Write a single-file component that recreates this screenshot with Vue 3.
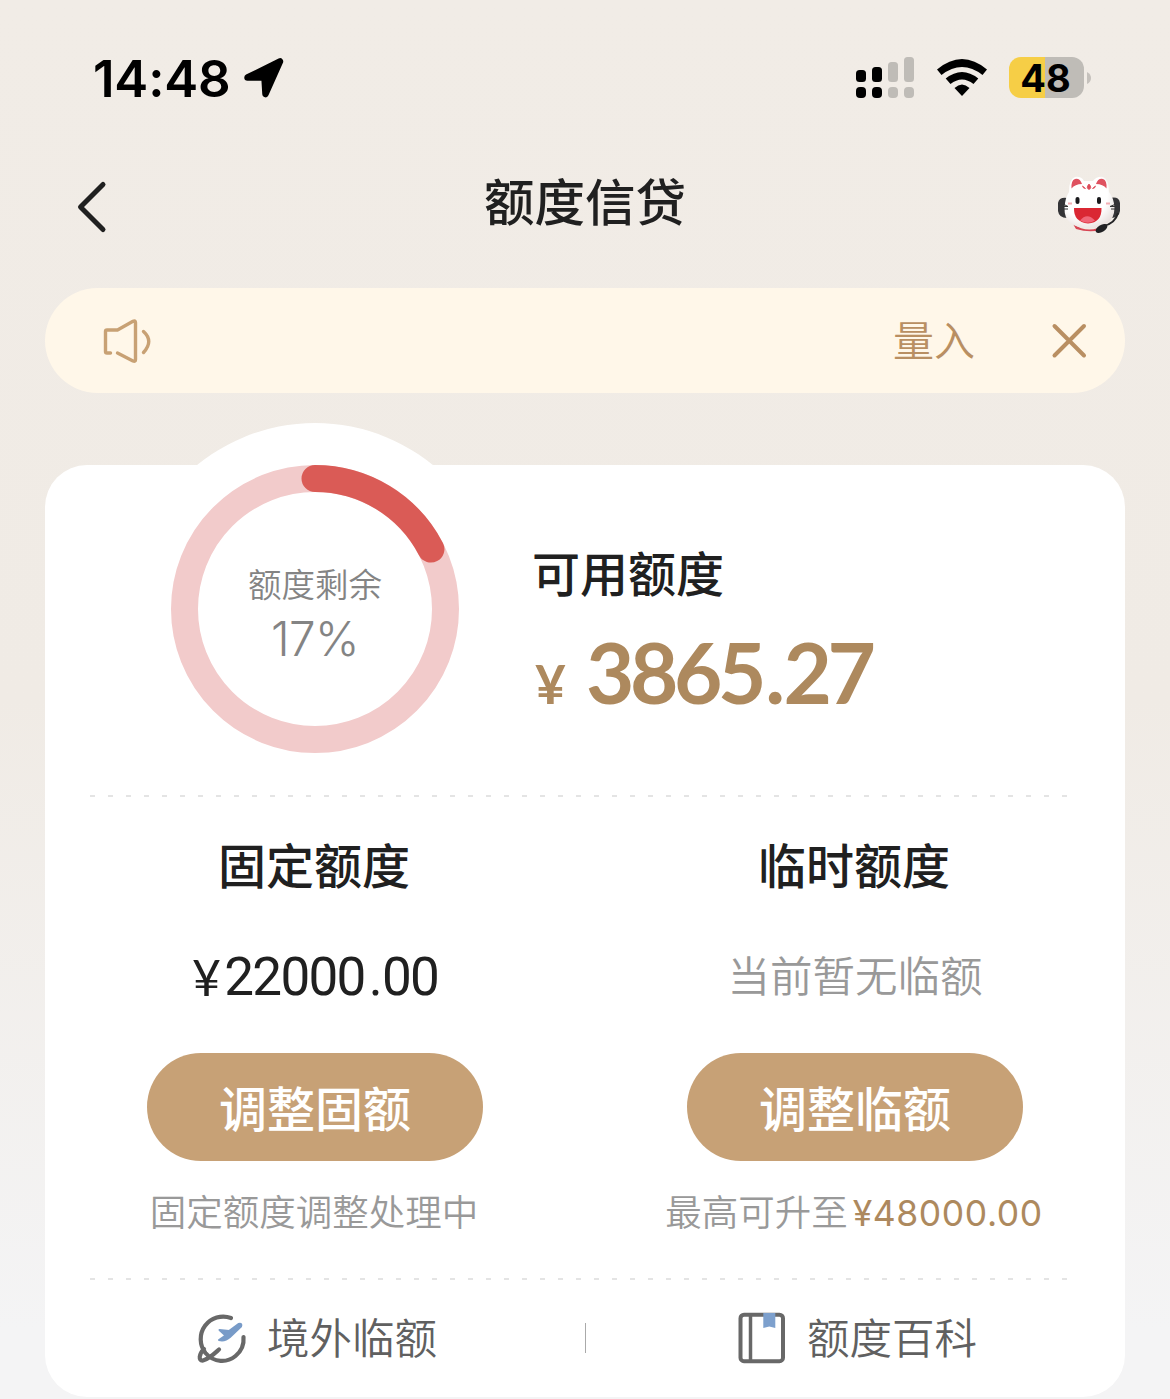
<script setup>
import { ref } from 'vue'

const percent = 17
const showNotice = ref(true)
const radius = 130.5
const circumference = 2 * Math.PI * radius
const arc = (circumference * (percent + 0.4)) / 100
</script>

<template>
  <div class="page">
    <header class="status">
      <span class="clock">14:48</span>
      <svg class="location" width="40" height="41" viewBox="0 0 40 41">
        <path d="M3.500 20.500 36 4.500 21.500 37 20.500 20.500Z" stroke="#000" stroke-width="6.500" stroke-linejoin="round" />
      </svg>
      <svg class="signal" width="60" height="42" viewBox="0 0 60 42">
        <g fill="#000">
          <rect x="1" y="13" width="10" height="12" rx="3.500" /><rect x="17" y="10" width="10" height="15" rx="3.500" />
          <rect x="1" y="30" width="10" height="11" rx="4" /><rect x="17" y="30" width="10" height="11" rx="4" />
        </g>
        <g fill="#bfbcb7">
          <rect x="33" y="5" width="10" height="20" rx="3.500" /><rect x="49" y="0" width="10" height="25" rx="3.500" />
          <rect x="33" y="30" width="10" height="11" rx="4" /><rect x="49" y="30" width="10" height="11" rx="4" />
        </g>
      </svg>
      <svg class="wifi" width="50" height="38" viewBox="0 0 50 38">
        <path d="M0 10.500Q25-10.500 50 10.500L45.500 16Q25 0 4.500 16ZM8.700 19.500Q25 6.500 41.300 19.500L36.500 25Q25 16 13.500 25ZM17.500 29Q25 22 32.500 29L25 37Z" />
      </svg>
      <div class="battery"><span>48</span></div>
      <svg class="tip" width="4" height="12" viewBox="0 0 4 12"><path d="M0 0Q4 2 4 6T0 12Z" fill="#c5c1bc" /></svg>
    </header>

    <nav class="nav">
      <svg class="back" width="34" height="54" viewBox="0 0 34 54"><path d="M29 4.500 6.500 27 29 49.500" fill="none" stroke="#202020" stroke-width="5" stroke-linecap="round" stroke-linejoin="round" /></svg>
      <h1>额度信贷</h1>
      <svg class="mascot" width="66" height="60" viewBox="0 0 66 60">
        <defs>
          <radialGradient id="face" cx=".4" cy=".35" r=".7">
            <stop offset=".65" stop-color="#fff" /><stop offset="1" stop-color="#e9e1df" />
          </radialGradient>
        </defs>
        <path d="M17 49Q33 60 50 49L45 55Q33 58 20 54Z" fill="#d74654" />
        <path d="M11 23Q3 22 2 28V36Q3 43 11 43ZM54 23Q63 21 64 28V36Q63 43 55 43Z" fill="#343437" />
        <path d="M13 17Q13 4 19 2Q25 1 28 6H37Q41 1 47 2Q53 4 53 17Q58 23 58.500 33Q58 53 33 53Q8 53 8.500 33Q9 23 13 17Z" fill="url(#face)" />
        <path d="M15.500 13.500Q15 5 19 4Q24 3 26 9Q19 9 15.500 13.500ZM50.500 13.500Q51 5 47 4Q42 3 40 9Q47 9 50.500 13.500Z" fill="#df5260" />
        <path d="M33 9Q29.500 13 33 14.500Q36.500 13 33 9ZM26.500 11Q27 13.500 29.500 13.500ZM39.500 11Q39 13.500 36.500 13.500Z" fill="#dc4a58" stroke="#dc4a58" stroke-width=".8" />
        <rect x="19.500" y="22" width="4" height="7" rx="2" fill="#19191c" /><rect x="41" y="22" width="4" height="7" rx="2" fill="#19191c" />
        <path d="M12 28.500H16M50 28.500H54" stroke="#f2adb3" stroke-width="2" />
        <path d="M18 33H45.500Q46 47.500 32 48.500Q17.500 47 18 33Z" fill="#da2733" />
        <path d="M24 45.500Q31 37 39 45.500Q32 50 24 45.500Z" fill="#f06678" />
        <path d="M7 29 12 31.500H6M8 34H12M60 29 54 31.500H61M55 34H60" fill="none" stroke="#333" />
        <path d="M62 38Q59 49 47 51" fill="none" stroke="#242426" stroke-width="2" />
        <ellipse cx="45.500" cy="53.500" rx="6.500" ry="3.500" fill="#202023" transform="rotate(-30 45.500 53.500)" />
      </svg>
    </nav>

    <section v-if="showNotice" class="notice">
      <svg class="speaker" width="50" height="46" viewBox="0 0 50 46" fill="none" stroke="#c8a174" stroke-width="3.400" stroke-linecap="round" stroke-linejoin="round">
        <path d="M8.500 35H5Q3.500 35 3.500 33.500V13.500Q3.500 12 5 12H15.500L31 3.300Q33.500 2.200 33.500 4.500V41.500Q33.500 44 31 43L15.500 35M41.500 13.500Q52 23 41.500 34.500" />
      </svg>
      <span>量入</span>
      <svg class="close" width="36" height="36" viewBox="0 0 36 36" @click="showNotice = false"><path d="M3.500 3 33 32.500M33 3 3.500 32.500" stroke="#b98f62" stroke-width="4" stroke-linecap="round" /></svg>
    </section>

    <main class="card">
      <section class="summary">
        <div class="gauge">
          <svg width="288" height="288" viewBox="0 0 288 288">
            <g fill="none" stroke-width="27" transform="rotate(-90 144 144)">
              <circle cx="144" cy="144" :r="radius" stroke="#f2cbcb" />
              <circle cx="144" cy="144" :r="radius" stroke="#da5b56" stroke-linecap="round" :stroke-dasharray="`${arc} ${circumference}`" />
            </g>
          </svg>
          <div class="gauge-text"><span>额度剩余</span><b>{{ percent }}%</b></div>
        </div>
        <div class="available">
          <h2>可用额度</h2>
          <p><span class="yen">¥</span><span class="amount">3865<span class="point">.</span>27</span></p>
        </div>
      </section>

      <div class="dash"></div>

      <section class="limits">
        <div class="limit">
          <h2>固定额度</h2>
          <p class="fixed"><span class="fixed-yen">¥</span>22000<span class="fixed-point">.</span>00</p>
          <button>调整固额</button>
          <p class="hint">固定额度调整处理中</p>
        </div>
        <div class="limit">
          <h2>临时额度</h2>
          <p class="none">当前暂无临额</p>
          <button>调整临额</button>
          <p class="hint">最高可升至<em>¥48000.00</em></p>
        </div>
      </section>

      <div class="dash"></div>

      <footer class="links">
        <a>
          <svg width="52" height="52" viewBox="0 0 52 52" fill="none" stroke="#686868" stroke-width="4.200" stroke-linecap="round" stroke-linejoin="round">
            <path d="M36 6A22.500 22.500 0 0 0 10.500 41C19 51 32 51 40.500 44A22 22 0 0 0 48.500 25M9 37C4 42 3 49 8 48.500C14 47 19 42 24 37.500" />
            <path d="M24.500 18 34 19 43.500 12Q47.500 11 46 14.500L35 25Q30 29.500 24 28L30.500 23.500Z" fill="#789bc8" stroke="#789bc8" stroke-width="2" />
          </svg>
          <span>境外临额</span>
        </a>
        <i></i>
        <a>
          <svg width="52" height="52" viewBox="0 0 52 52" fill="none">
            <rect x="5.500" y="2.700" width="42.500" height="46.500" rx="3.500" stroke="#686868" stroke-width="4" />
            <path d="M15.500 3V49" stroke="#686868" stroke-width="3.500" />
            <path d="M28.300 1H40.300V16L34.300 14.500 28.300 16Z" fill="#7da0cd" />
          </svg>
          <span>额度百科</span>
        </a>
      </footer>
    </main>
  </div>
</template>

<style>
body { margin: 0; }
</style>

<style scoped>
* { box-sizing: border-box; }
.page {
  width: 1170px;
  height: 1399px;
  overflow: hidden;
  background: linear-gradient(#f1ece6 0, #f0ebe5 50%, #f4f4f5 95%);
  font-family: Inter, "Noto Sans CJK SC", sans-serif;
  color: #202020;
}
h1, h2, p { margin: 0; font-weight: 500; white-space: nowrap; }
svg { display: block; flex: none; }
.status { height: 144px; padding: 0 79px 0 93px; display: flex; align-items: flex-start; color: #000; }
.clock { width: 137px; margin: 49px 14px 0 0; font-size: 51px; line-height: 60px; font-weight: 600; letter-spacing: -.2px; white-space: nowrap; }
.location { margin-top: 57px; }
.signal { margin: 57px 0 0 auto; }
.wifi { margin: 59px 22px 0; }
.battery { width: 75px; height: 41px; margin-top: 57px; padding-right: 2px; border-radius: 12px; background: linear-gradient(90deg, #f6ce46 36px, #bfbcb7 36px); font-size: 38px; line-height: 42px; font-weight: 700; text-align: center; }
.tip { margin: 72px 0 0 3px; }
.nav { height: 144px; padding: 0 48px 0 74px; display: flex; justify-content: space-between; align-items: flex-start; }
.back { margin-top: 36px; }
.nav h1 { margin: 18px 0 0 6px; font-size: 50.500px; line-height: 74px; font-family: "Noto Sans CJK SC", sans-serif; }
.mascot { margin-top: 31px; }
.notice { height: 105px; margin: 0 45px; padding: 0 38px 0 57px; display: flex; align-items: center; border-radius: 53px; background: #fff7e9; }
.notice span { margin-left: auto; color: #b98f62; font-size: 41px; font-weight: 350; line-height: 60px; }
.close { margin-left: 76px; }
.card { width: 1080px; height: 932px; margin: 72px 45px 0; padding-top: 1px; border-radius: 42px; background: #fff; }
.summary { height: 329px; display: flex; }
.gauge { position: relative; width: 372px; height: 372px; margin: -43px 0 0 84px; padding: 42px; border-radius: 50%; background: #fff; flex: none; }
.gauge-text { position: absolute; inset: 0; display: flex; flex-direction: column; align-items: center; padding-top: 138px; color: #848484; }
.gauge-text span { font-size: 33.500px; line-height: 48px; font-weight: 350; }
.gauge-text b { margin-top: 2px; font-size: 47.500px; line-height: 56px; font-weight: 350; letter-spacing: -.6px; }
.available { padding: 71px 0 0 31px; }
h2 { font-size: 48px; line-height: 68px; font-family: "Noto Sans CJK SC", sans-serif; }
.available p { display: flex; align-items: baseline; height: 90px; margin-top: 17px; color: #ad895e; font-family: Lato, sans-serif; font-weight: 700; font-kerning: none; }
.yen { width: 54px; padding-left: 3px; font-size: 53px; }
.amount { font-size: 83.500px; line-height: 100px; letter-spacing: -4.400px; }
.point { margin: 0 3px 0 3px; }
.dash { height: 2px; margin: 0 54px 0 45px; background: repeating-linear-gradient(90deg, #e4e4e4 0 5px, transparent 5px 18px); }
.limits { height: 481px; display: flex; }
.limit { width: 50%; padding-top: 32px; display: flex; flex-direction: column; align-items: center; }
.limit h2 { margin-right: 2px; }
.fixed { height: 80px; margin-top: 40px; display: flex; align-items: center; font: 400 53px/80px Roboto, sans-serif; letter-spacing: -1.700px; }
.fixed-yen { margin-right: 5px; font-family: Lato, sans-serif; font-weight: 400; font-size: 50px; }
.fixed-point { margin: 0 1px 0 4px; }
.none { height: 80px; margin-top: 40px; color: #999; font-size: 42.500px; font-weight: 350; line-height: 79px; }
button { width: 336px; height: 108px; margin-top: 36px; padding: 0 0 2px; border: 0; border-radius: 54px; background: #c7a176; color: #fff; font: 500 48px/104px "Noto Sans CJK SC", sans-serif; }
.hint { margin: 24px 2px 0 0; font-size: 36.500px; line-height: 56px; font-weight: 350; color: #999; }
.hint em { margin-left: 5px; color: #ad895e; font-style: normal; font-weight: 400; font-size: 35.500px; letter-spacing: .6px; }
.links { height: 116px; display: flex; align-items: center; }
.links a { width: 540px; display: flex; align-items: center; padding-left: 150px; font-size: 42.500px; font-weight: 350; color: #606060; }
.links a span { margin: 2px 0 0 20px; line-height: 60px; }
.links i { width: 1px; height: 30px; margin-right: -1px; background: #aaa; }
</style>
